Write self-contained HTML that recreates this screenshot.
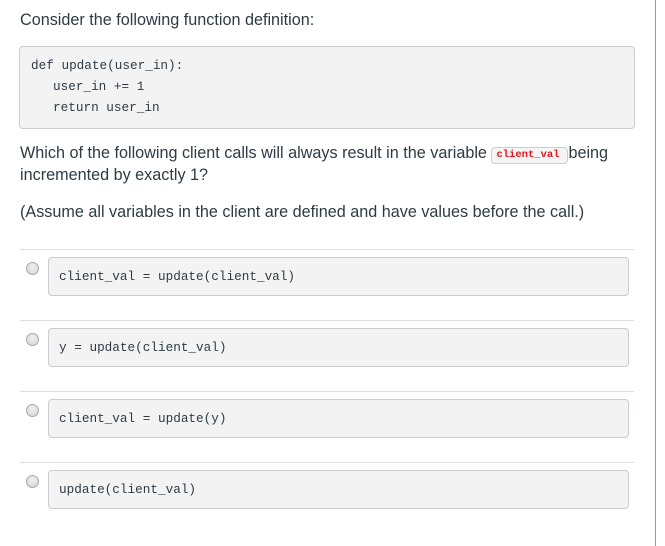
<!DOCTYPE html>
<html><head><style>
body{margin:0;width:665px;height:546px;background:#fff;position:relative;overflow:hidden;font-family:"Liberation Sans",sans-serif;color:#2d3b45;}
.vl{position:absolute;left:655px;top:0;width:1px;height:546px;background:#9a9a9a}
.t{position:absolute;left:20px;font-size:16.2px;white-space:nowrap}
.mono{font-family:"Liberation Mono",monospace;font-size:12.7px}
.code{position:absolute;left:19px;top:46px;width:614px;height:81px;background:#f3f3f3;border:1px solid #c7cdd1;border-radius:4px}
.cl{position:absolute;white-space:pre}
.sep{position:absolute;left:20px;width:614px;height:1px;background:#dcdedf}
.opt{position:absolute;left:48px;width:579px;height:37px;background:#f3f3f3;border:1px solid #c7cdd1;border-radius:4px}
.opt span{position:absolute;left:10px;top:11px;white-space:pre}
.r{position:absolute;left:26px;width:11px;height:11px;border-radius:50%;border:1px solid #a9a9a9;background:radial-gradient(circle at 50% 35%,#f0f0f0,#d4d4d4)}
.ic{display:inline-block;font-family:"Liberation Mono",monospace;font-size:10.5px;color:#e0151c;background:#f5f5f5;border:1px solid #c7cdd1;border-radius:4px;padding:0 8px 0 4px;line-height:15px;font-weight:bold;vertical-align:1px}
</style></head><body>
<div class="vl"></div>
<div class="t" style="top:11px">Consider the following function definition:</div>
<div class="code mono">
<div class="cl" style="left:11px;top:11px">def update(user_in):</div>
<div class="cl" style="left:33px;top:32px">user_in += 1</div>
<div class="cl" style="left:33px;top:53px">return user_in</div>
</div>
<div class="t" style="top:144px">Which of the following client calls will always result in the variable <span class="ic">client_val</span>being</div>
<div class="t" style="top:166px">incremented by exactly 1?</div>
<div class="t" style="top:203px">(Assume all variables in the client are defined and have values before the call.)</div>

<div class="sep" style="top:249px"></div>
<div class="r" style="top:262px"></div>
<div class="opt mono" style="top:257px"><span>client_val = update(client_val)</span></div>

<div class="sep" style="top:320px"></div>
<div class="r" style="top:333px"></div>
<div class="opt mono" style="top:328px"><span>y = update(client_val)</span></div>

<div class="sep" style="top:391px"></div>
<div class="r" style="top:404px"></div>
<div class="opt mono" style="top:399px"><span>client_val = update(y)</span></div>

<div class="sep" style="top:462px"></div>
<div class="r" style="top:475px"></div>
<div class="opt mono" style="top:470px"><span>update(client_val)</span></div>
</body></html>
